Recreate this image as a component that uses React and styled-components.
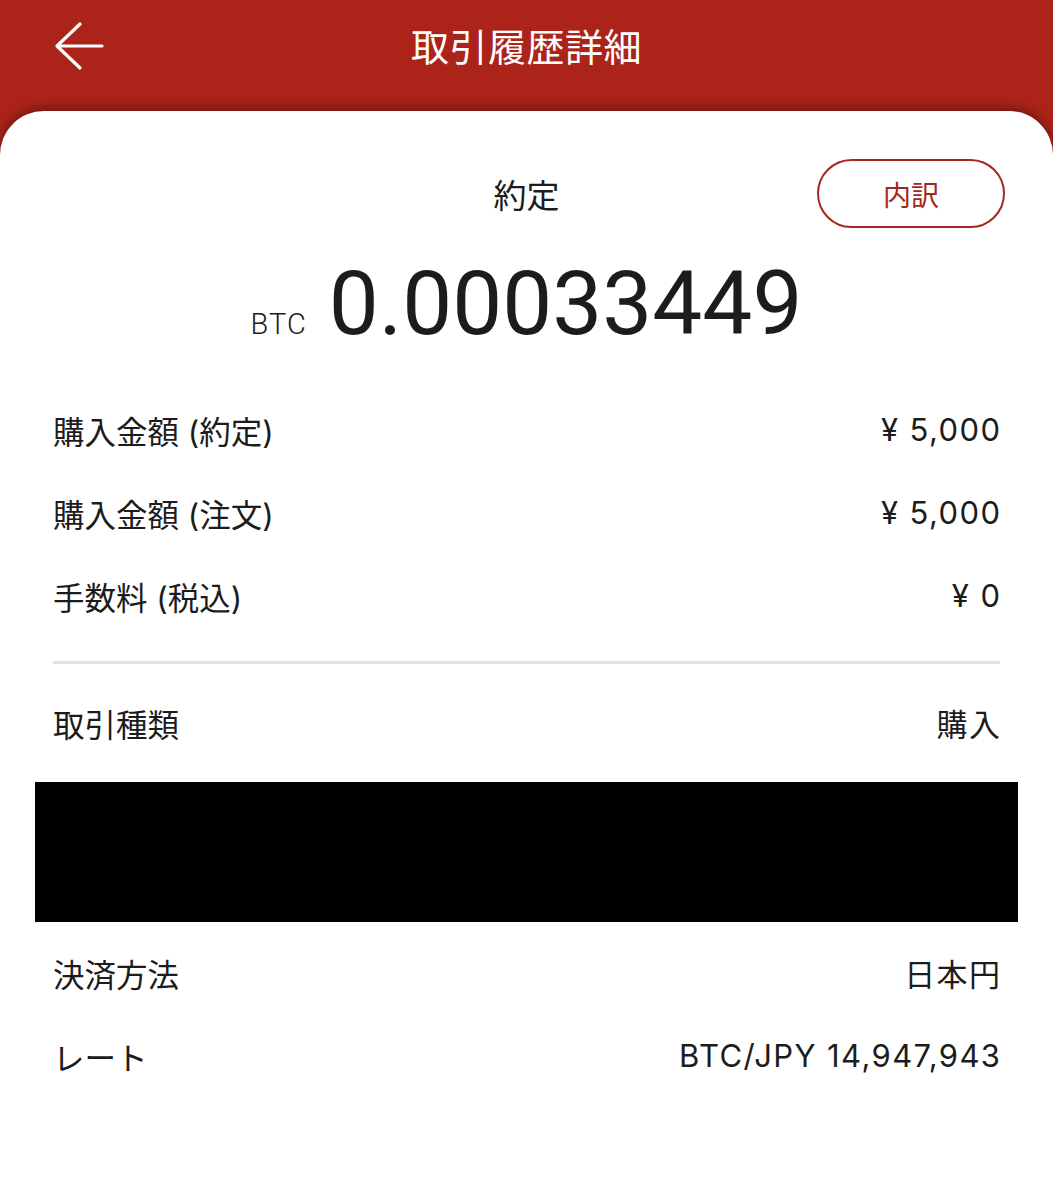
import React from 'react';
import styled, { createGlobalStyle } from 'styled-components';

const GlobalStyle = createGlobalStyle`
  html, body {
    margin: 0;
    padding: 0;
    background: #ffffff;
  }
  body {
    font-family: Inter, "Noto Sans CJK JP", sans-serif;
    color: #1c1c1c;
  }
`;

const RED = '#ac2419';

export const Screen = styled.div`
  width: 1053px;
  min-height: 1200px;
  background: ${RED};
  display: flex;
  flex-direction: column;
`;

export const Header = styled.header`
  height: 92px;
  padding: 0 0 19px;
  display: grid;
  grid-template-columns: 1fr auto 1fr;
  align-items: center;
`;

export const BackButton = styled.button`
  justify-self: start;
  margin-left: 54px;
  width: 50px;
  height: 50px;
  padding: 0;
  border: 0;
  background: none;
  display: flex;
  cursor: pointer;
`;

export const Title = styled.h1`
  margin: 0 0 3px;
  font-family: "Noto Sans CJK JP", sans-serif;
  font-size: 38px;
  font-weight: 400;
  color: #ffffff;
  letter-spacing: 0.5px;
`;

export const Card = styled.main`
  flex: 1;
  background: #ffffff;
  border-radius: 44px 44px 0 0;
  box-shadow: 0 -3px 12px rgba(0, 0, 0, 0.38);
  padding: 48px 53px 0;
`;

export const TopRow = styled.div`
  display: grid;
  grid-template-columns: 1fr auto 1fr;
  align-items: center;
  height: 69px;
`;

export const Status = styled.div`
  grid-column: 2;
  font-family: "Noto Sans CJK JP", sans-serif;
  font-size: 33px;
  color: #1c1c1c;
`;

export const OutlineButton = styled.button`
  justify-self: end;
  margin-right: -5px;
  width: 188px;
  height: 69px;
  border: 2.5px solid #a6261d;
  border-radius: 35px;
  background: #ffffff;
  color: #a6261d;
  font-family: "Noto Sans CJK JP", sans-serif;
  font-size: 28px;
  cursor: pointer;
`;

export const Amount = styled.div`
  margin-top: 31px;
  display: flex;
  justify-content: center;
  align-items: baseline;
  gap: 22px;
  line-height: 1;
`;

export const Unit = styled.span`
  font-family: Roboto, sans-serif;
  font-size: 29px;
  font-weight: 300;
  letter-spacing: 1px;
`;

export const Quantity = styled.span`
  font-family: Roboto, sans-serif;
  font-size: 89px;
  font-weight: 400;
`;

export const List = styled.section`
  margin-top: ${(p) => p.$top || 0}px;
`;

export const Row = styled.div`
  box-sizing: border-box;
  height: 83px;
  padding-bottom: 6px;
  display: flex;
  justify-content: space-between;
  align-items: center;
`;

export const Label = styled.span`
  font-family: Inter, "Noto Sans CJK JP", sans-serif;
  font-size: 31.5px;
`;

export const Value = styled.span`
  font-family: Inter, "Noto Sans CJK JP", sans-serif;
  font-size: 31px;
  letter-spacing: 1.4px;
  margin-right: -1.4px;
`;

export const Divider = styled.hr`
  margin: 21px 0 20px;
  border: 0;
  height: 3px;
  background: #e2e2e2;
`;

export const Redacted = styled.div`
  margin: 15px -18px 12px;
  height: 140px;
  background: #000000;
`;

const ArrowLeft = () => (
  <svg width="50" height="50" viewBox="0 0 50 50" fill="none">
    <path
      d="M3 25 H48 M26 3 L3 25 L26 47"
      stroke="#ffffff"
      strokeWidth="3.2"
      strokeLinecap="round"
      strokeLinejoin="round"
    />
  </svg>
);

const amounts = [
  ['購入金額 (約定)', '¥ 5,000'],
  ['購入金額 (注文)', '¥ 5,000'],
  ['手数料 (税込)', '¥ 0'],
];

const details = [
  ['決済方法', '日本円'],
  ['レート', 'BTC/JPY 14,947,943'],
];

export default function App() {
  return (
    <Screen>
      <GlobalStyle />
      <Header>
        <BackButton aria-label="戻る">
          <ArrowLeft />
        </BackButton>
        <Title>取引履歴詳細</Title>
      </Header>
      <Card>
        <TopRow>
          <Status>約定</Status>
          <OutlineButton>内訳</OutlineButton>
        </TopRow>
        <Amount>
          <Unit>BTC</Unit>
          <Quantity>0.00033449</Quantity>
        </Amount>
        <List $top={43}>
          {amounts.map(([label, value]) => (
            <Row key={label}>
              <Label>{label}</Label>
              <Value>{value}</Value>
            </Row>
          ))}
        </List>
        <Divider />
        <Row>
          <Label>取引種類</Label>
          <Value>購入</Value>
        </Row>
        <Redacted />
        <List>
          {details.map(([label, value]) => (
            <Row key={label}>
              <Label>{label}</Label>
              <Value>{value}</Value>
            </Row>
          ))}
        </List>
      </Card>
    </Screen>
  );
}
